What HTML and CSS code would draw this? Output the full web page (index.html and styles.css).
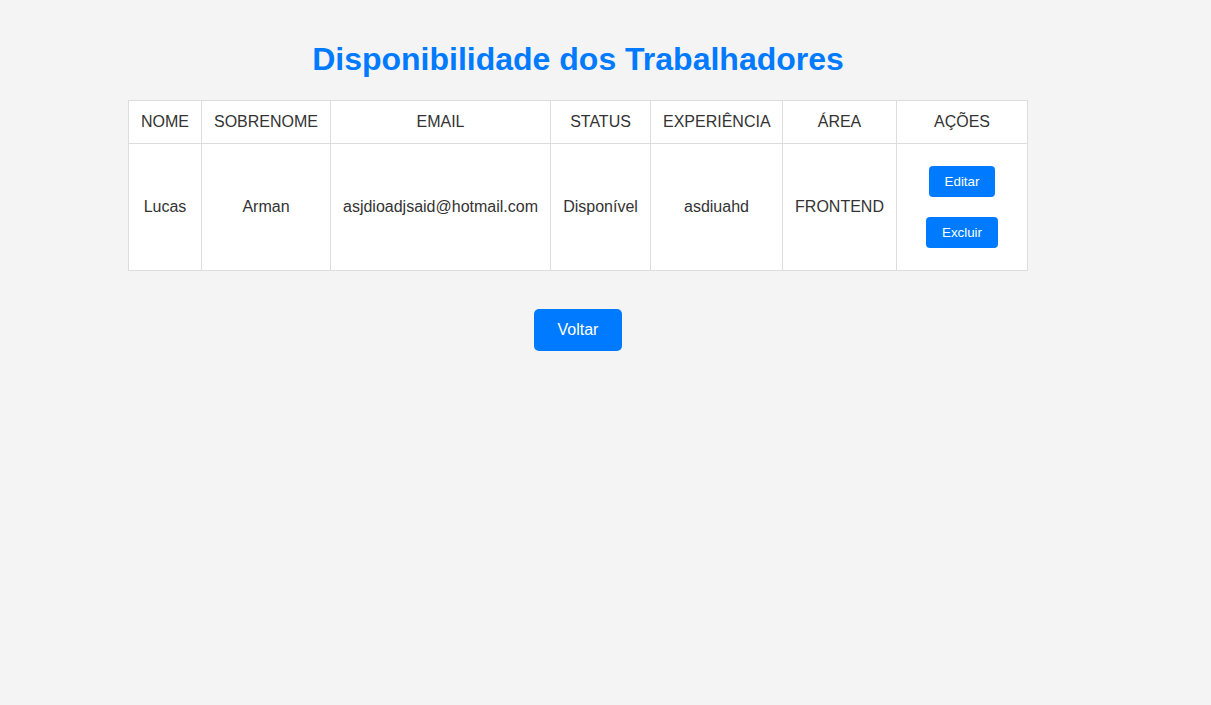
FILE: index.html
```html
<!DOCTYPE html>
<html lang="pt-BR">
<head>
<meta charset="utf-8">
<title>Disponibilidade dos Trabalhadores</title>
<link rel="stylesheet" href="styles.css">
</head>
<body>
<div class="page">
  <h1 class="title">Disponibilidade dos Trabalhadores</h1>
  <table class="workers">
    <thead>
      <tr>
        <th class="c-nome">NOME</th>
        <th class="c-sobrenome">SOBRENOME</th>
        <th class="c-email">EMAIL</th>
        <th class="c-status">STATUS</th>
        <th class="c-exp">EXPERIÊNCIA</th>
        <th class="c-area">ÁREA</th>
        <th class="c-acoes">AÇÕES</th>
      </tr>
    </thead>
    <tbody>
      <tr>
        <td>Lucas</td>
        <td>Arman</td>
        <td>asjdioadjsaid@hotmail.com</td>
        <td>Disponível</td>
        <td>asdiuahd</td>
        <td>FRONTEND</td>
        <td>
          <div class="row-actions">
            <button class="btn btn-small">Editar</button>
            <button class="btn btn-small">Excluir</button>
          </div>
        </td>
      </tr>
    </tbody>
  </table>
  <div class="actions">
    <button class="btn btn-large">Voltar</button>
  </div>
</div>
</body>
</html>
```
FILE: styles.css
```css
html, body {
  margin: 0;
  padding: 0;
}
body {
  background: #f4f4f4;
  font-family: "Liberation Sans", Arial, sans-serif;
  color: #333;
}
.page {
  width: 1156px;
  padding: 20px 0;
}
.title {
  text-align: center;
  color: #007bff;
  font-size: 32px;
  font-weight: bold;
  margin: 21px 0 22px;
}
.workers {
  width: 900px;
  margin: 0 auto;
  border-collapse: collapse;
  table-layout: fixed;
  background: #fff;
}
.workers th,
.workers td {
  border: 1px solid #ddd;
  padding: 12px;
  text-align: center;
  font-size: 16px;
  font-weight: normal;
  color: #333;
  white-space: nowrap;
}
.c-nome { width: 48px; }
.c-sobrenome { width: 104px; }
.c-email { width: 195px; }
.c-status { width: 75px; }
.c-exp { width: 107px; }
.c-area { width: 89px; }
.c-acoes { width: 106px; }
.row-actions {
  display: flex;
  flex-direction: column;
  align-items: center;
  gap: 20px;
  padding: 10px 0;
}
.btn {
  background: #007bff;
  color: #fff;
  border: none;
  border-radius: 4px;
  font-family: "Liberation Sans", Arial, sans-serif;
  cursor: pointer;
}
.btn-small {
  padding: 8px 16px;
  font-size: 13.33px;
  line-height: 15px;
}
.actions {
  text-align: center;
  margin-top: 38px;
}
.btn-large {
  padding: 12px 24px;
  font-size: 16px;
  line-height: 18px;
  border-radius: 5px;
}
```
